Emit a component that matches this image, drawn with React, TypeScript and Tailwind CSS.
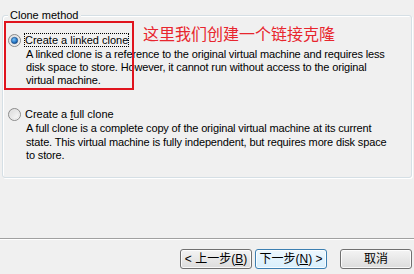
import React from 'react';

const Radio: React.FC<{ checked?: boolean }> = ({ checked = false }) => (
  <svg width="13" height="13" viewBox="0 0 13 13" className="shrink-0">
    <defs>
      <linearGradient id={checked ? 'rbg1' : 'rbg0'} x1="0" y1="0" x2="1" y2="1">
        <stop offset="0" stopColor="#d6d6d6" />
        <stop offset="1" stopColor="#ffffff" />
      </linearGradient>
      <radialGradient id="dot" cx="0.4" cy="0.35" r="0.7">
        <stop offset="0" stopColor="#7cc4f5" />
        <stop offset="0.6" stopColor="#2a7ccb" />
        <stop offset="1" stopColor="#0e3f7a" />
      </radialGradient>
    </defs>
    <circle cx="6.5" cy="6.5" r="6" fill={`url(#${checked ? 'rbg1' : 'rbg0'})`} stroke="#8a8a8a" strokeWidth="1" />
    <circle cx="6.5" cy="6.5" r="4.5" fill="none" stroke="#e6e6e6" strokeWidth="1" />
    {checked && <circle cx="6.5" cy="6.5" r="3.2" fill="url(#dot)" stroke="#1e4f86" strokeWidth="0.6" />}
  </svg>
);

const WinButton: React.FC<{ children: React.ReactNode; focused?: boolean; className?: string }> = ({ children, focused = false, className = '' }) => (
  <div
    className={`h-[20px] w-[72px] flex items-center justify-center rounded-[3px] border text-[12px] leading-none text-black ${
      focused
        ? 'border-[#3c7fb1] bg-gradient-to-b from-[#eef8fe] to-[#d8effc]'
        : 'border-[#707070] bg-gradient-to-b from-[#f4f4f4] to-[#dcdcdc]'
    } ${className}`}
    style={{ boxShadow: 'inset 0 0 0 1px rgba(255,255,255,0.8)' }}
  >
    {children}
  </div>
);

export default function App() {
  return (
    <div
      className="relative w-[414px] h-[274px] overflow-hidden bg-[#f0f0f0] text-black"
      style={{ fontFamily: '"Liberation Sans", "Noto Sans CJK SC", sans-serif' }}
    >
      {/* Group box */}
      <div className="relative mt-[15px] ml-[2px] w-[410px] h-[163px] rounded-[3px] border border-[#d5dfe5] shadow-[inset_1px_1px_0_#ffffff,1px_1px_0_#ffffff]">
        <div className="absolute -top-[9px] left-[5px] px-[2px] bg-[#f0f0f0] text-[11px] leading-[16px]">
          Clone method
        </div>

        <div className="pt-[17px] pl-[5px] text-[11px]">
          <div className="flex items-center gap-[3px]">
            <Radio checked />
            <span className="px-[1px] leading-[14px] outline outline-1 outline-dotted outline-black -outline-offset-1">
              Create a linked clone
            </span>
          </div>
          <div className="ml-[18px] mt-[1px] leading-[13px] whitespace-nowrap tracking-[-0.15px]">
            A linked clone is a reference to the original virtual machine and requires less<br />
            disk space to store. However, it cannot run without access to the original<br />
            virtual machine.
          </div>

          <div className="flex items-center gap-[3px] mt-[20px]">
            <Radio />
            <span className="px-[1px] leading-[14px]">
              Create a <span className="underline">f</span>ull clone
            </span>
          </div>
          <div className="ml-[18px] mt-[1px] leading-[13.5px] whitespace-nowrap tracking-[-0.15px]">
            A full clone is a complete copy of the original virtual machine at its current<br />
            state. This virtual machine is fully independent, but requires more disk space<br />
            to store.
          </div>
        </div>
      </div>

      {/* Annotation */}
      <div className="absolute left-[4px] top-[21px] w-[130px] h-[69px] border-2 border-[#e0141e]" />
      <div className="absolute left-[143px] top-[25px] text-[16px] leading-[20px] text-[#e8262e] whitespace-nowrap">
        这里我们创建一个链接克隆
      </div>

      {/* Separator */}
      <div className="mt-[60px] border-t border-[#a0a0a0] border-b border-b-white" />

      {/* Buttons */}
      <div className="flex justify-end pr-[2px] mt-[9px]">
        <WinButton className="w-[71px]">&lt; 上一步(<span className="underline">B</span>)</WinButton>
        <WinButton focused className="ml-[3px]">下一步(<span className="underline">N</span>) &gt;</WinButton>
        <WinButton className="ml-[13px]">取消</WinButton>
      </div>
    </div>
  );
}
